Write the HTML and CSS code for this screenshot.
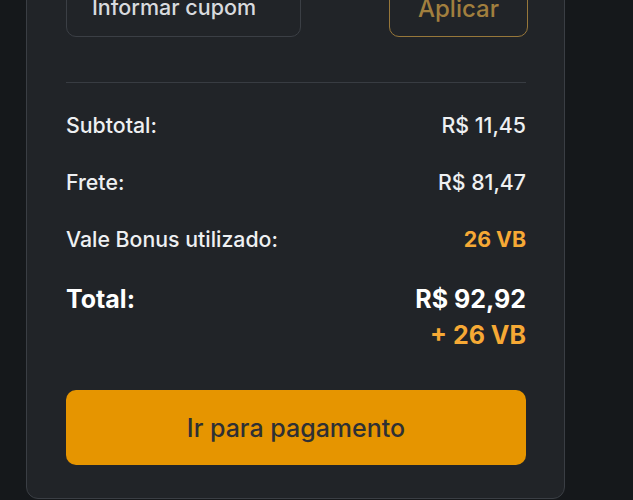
FILE: index.html
```html
<!DOCTYPE html>
<html lang="pt-BR">
<head>
<meta charset="utf-8">
<link rel="stylesheet" href="styles.css">
</head>
<body>
<div class="card">
  <div class="coupon">
    <div class="coupon-input">Informar cupom</div>
    <button class="btn-apply">Aplicar</button>
  </div>
  <hr class="divider">
  <div class="rows">
    <div class="row"><span>Subtotal:</span><span>R$ 11,45</span></div>
    <div class="row"><span>Frete:</span><span>R$ 81,47</span></div>
    <div class="row"><span>Vale Bonus utilizado:</span><span class="vb">26 VB</span></div>
  </div>
  <div class="total">
    <span class="total-label">Total:</span>
    <div class="total-values">
      <span>R$ 92,92</span>
      <span class="vb">+ 26 VB</span>
    </div>
  </div>
  <button class="btn-pay">Ir para pagamento</button>
</div>
</body>
</html>
```
FILE: styles.css
```css
* { box-sizing: border-box; }
html, body {
  margin: 0;
  height: 100%;
  background: #15181b;
  overflow: hidden;
}
body {
  font-family: Inter, "Noto Sans", sans-serif;
  color: #eef0f2;
}
.card {
  margin-left: 26px;
  width: 539px;
  margin-top: -60px;
  background: #212428;
  border: 1px solid #3a3e44;
  border-radius: 12px;
  padding: 40px 38px 33px 39px;
}
.coupon {
  display: flex;
  gap: 88px;
  height: 56px;
}
.coupon-input {
  flex: 0 0 235px;
  border: 1px solid #3b3f45;
  border-radius: 10px;
  padding: 0 25px;
  font-size: 21.5px;
  font-weight: 500;
  line-height: 50px;
  color: #d8dade;
  white-space: nowrap;
}
.btn-apply {
  flex: 0 0 139px;
  background: transparent;
  border: 1px solid #97773a;
  border-radius: 10px;
  color: #a17f3e;
  font-family: inherit;
  font-size: 24px;
  font-weight: 500;
  padding: 0;
  line-height: 52px;
}
.divider {
  margin: 45px 0 0 0;
  border: 0;
  height: 1px;
  background: #383c42;
}
.rows {
  display: flex;
  flex-direction: column;
  gap: 33px;
  margin-top: 30px;
}
.row {
  display: flex;
  justify-content: space-between;
  font-size: 21.3px;
  font-weight: 500;
  line-height: 24px;
}
.vb {
  color: #f6a935;
  font-weight: 700;
}
.total {
  display: flex;
  justify-content: space-between;
  margin-top: 30px;
  font-size: 25px;
  font-weight: 700;
  line-height: 36px;
  color: #ffffff;
}
.total-values {
  display: flex;
  flex-direction: column;
  align-items: flex-end;
}
.btn-pay {
  display: block;
  width: 100%;
  height: 75px;
  margin-top: 37px;
  background: #e69500;
  border: 0;
  border-radius: 10px;
  color: #2e3034;
  font-family: inherit;
  font-size: 25px;
  font-weight: 500;
}
```
